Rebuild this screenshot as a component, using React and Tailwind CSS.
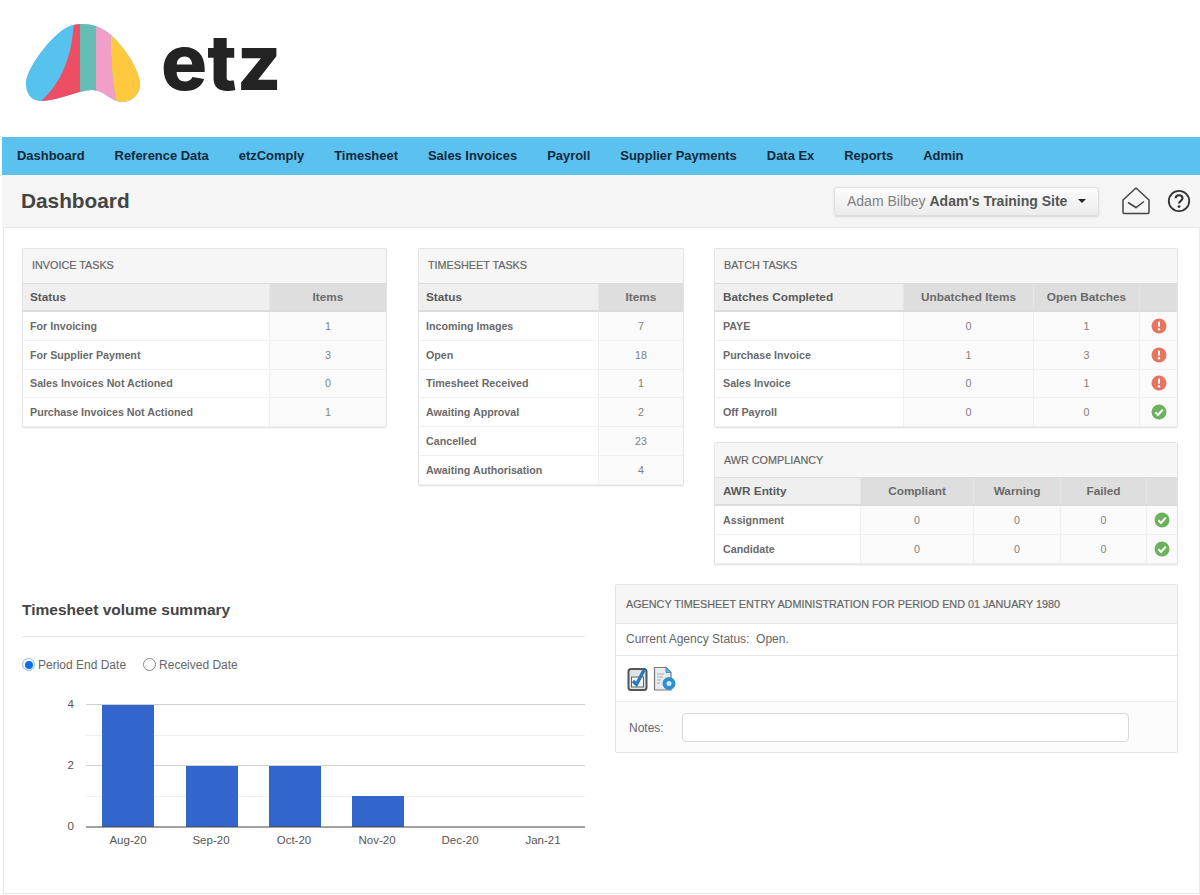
import React from "react";

const NAV = ["Dashboard","Reference Data","etzComply","Timesheet","Sales Invoices","Payroll","Supplier Payments","Data Ex","Reports","Admin"];

function Logo() {
  const blob = "M40 101C30 101 25 91 26 81C28 66 55 29 73 25C86 22 100 25 111 35C125 48 140 70 140 85C139 97 130 102 122 102C112 102 105 91 93 90C80 89 60 101 40 101Z";
  return (
    <svg width="130" height="90" viewBox="20 18 130 90" className="block">
      <defs><clipPath id="bl"><path d={blob} /></clipPath></defs>
      <g clipPath="url(#bl)">
        <rect x="20" y="18" width="130" height="90" fill="#58c2ee" />
        <path d="M74 20C72 60 60 85 38 104L80 104L81 20Z" fill="#ee4d63" />
        <rect x="80" y="18" width="17" height="90" fill="#66bdb4" />
        <path d="M96 18L96 108L118 108C113 90 110 60 111 18Z" fill="#f19fc8" />
        <path d="M111 18C110 60 113 90 118 108L150 108L150 18Z" fill="#fec93f" />
      </g>
    </svg>
  );
}

function Alert() {
  return (
    <svg width="16" height="16" viewBox="0 0 16 16" className="mx-auto block">
      <circle cx="8" cy="8" r="7.5" fill="#e8745f" />
      <rect x="7" y="3.5" width="2" height="5.5" rx="1" fill="#fff" />
      <circle cx="8" cy="11.3" r="1.2" fill="#fff" />
    </svg>
  );
}
function Ok() {
  return (
    <svg width="16" height="16" viewBox="0 0 16 16" className="mx-auto block">
      <circle cx="8" cy="8" r="7.5" fill="#6cb25c" />
      <path d="M4.3 8.3L7 11L11.8 5.6" fill="none" stroke="#fff" strokeWidth="2" />
    </svg>
  );
}

function Panel({ title, children, className }) {
  return (
    <section className={"border border-[#e3e3e3] rounded-[2px] bg-white shadow-[0_1px_1px_rgba(0,0,0,0.04)] " + className}>
      <h2 className="h-[34px] flex items-center pl-[9px] pb-[1px] bg-[#f6f6f6] text-[10.8px] font-normal text-[#666] [-webkit-text-stroke:0.2px_#666] uppercase">{title}</h2>
      {children}
    </section>
  );
}

function TaskTable({ cols, rows, inset = "pl-[7px]" }) {
  return (
    <div className="text-[#666]">
      <div className="flex h-[29px] pt-0 border-t border-b-2 border-[#dcdcdc]">
        {cols.map((c, i) => (
          <div key={i} className={c.w + " flex items-center pt-[2px] text-[11.8px] font-bold " + (i === 0 ? inset + " bg-[#efefef] text-[#5a5a5a]" : "justify-center bg-[#dedede] border-l border-[#e6e6e6] text-[#6a6a6a]")}>{c.t}</div>
        ))}
      </div>
      {rows.map((r, i) => (
        <div key={i} className="flex h-[28.8px] border-b border-[#f0f0f0]">
          {r.map((v, j) => (
            <div key={j} className={cols[j].w + " flex items-center " + (j === 0 ? inset + " text-[10.7px] font-bold text-[#6a6a6a]" : "justify-center text-[10.7px] text-[#808080] bg-[#fafafa] border-l border-[#efefef]")}>{v}</div>
          ))}
        </div>
      ))}
    </div>
  );
}

function Chart() {
  const bars = [[102, 705], [186, 766], [269, 766], [352, 796]];
  const labels = [["Aug-20",128],["Sep-20",211],["Oct-20",294],["Nov-20",377],["Dec-20",460],["Jan-21",543]];
  return (
    <svg width="566" height="170" viewBox="22 690 566 170" className="block mt-[17px]">
      {[735, 796].map(y => <line key={y} x1="86" x2="585" y1={y + 0.5} y2={y + 0.5} stroke="#efefef" />)}
      {[705, 766].map(y => <line key={y} x1="86" x2="585" y1={y - 0.5} y2={y - 0.5} stroke="#d0d0d0" />)}
      {bars.map(([x, y]) => <rect key={x} x={x} y={y} width="52" height={827 - y} fill="#3366cc" />)}
      <line x1="86" x2="585" y1="827" y2="827" stroke="#444" />
      {[[4, 708], [2, 769], [0, 830]].map(([t, y]) => (
        <text key={t} x="74" y={y} textAnchor="end" fontSize="11.5" fill="#555" fontFamily="Liberation Sans, Arial, sans-serif">{t}</text>
      ))}
      {labels.map(([t, x]) => (
        <text key={t} x={x} y="844" textAnchor="middle" fontSize="11.5" fill="#555" fontFamily="Liberation Sans, Arial, sans-serif">{t}</text>
      ))}
    </svg>
  );
}

function DocIcons() {
  return (
    <div className="flex items-center gap-[3px] pl-[11px] pt-[2px] h-[45px]">
      <svg width="23" height="26" viewBox="0 0 23 26">
        <rect x="1.5" y="3" width="18" height="21" rx="2.5" fill="#dfe3e6" stroke="#555" strokeWidth="2" />
        <rect x="4.5" y="11" width="12" height="10" fill="#f4f5f6" stroke="#666" />
        <path d="M6 15L9.5 18.5L17 4" fill="none" stroke="#2a7ab8" strokeWidth="3.4" />
      </svg>
      <svg width="24" height="26" viewBox="0 0 24 26">
        <path d="M1.5 1.5H13L18 6.5V24H1.5Z" fill="#e8ebed" stroke="#777" strokeWidth="1.2" />
        <path d="M4 8H11M4 11H10M4 14H8M4 17H7" stroke="#a8aeb4" />
        <path d="M13 1.5V6.5H18Z" fill="#6ab7e0" stroke="#4a8fbd" />
        <circle cx="16" cy="17.5" r="6.5" fill="#2f8fd0" />
        <circle cx="16" cy="17.5" r="2.5" fill="#cfe9f7" />
      </svg>
    </div>
  );
}

export default function App() {
  return (
    <div className="w-[1200px] h-[895px] overflow-hidden bg-white pl-[2px] font-['Liberation_Sans',Arial,sans-serif]">
      <header className="h-[137px] flex items-start">
        <div className="ml-[18px] mt-[18px]"><Logo /></div>
        <span className="ml-[11px] mt-[17px] text-[77px] leading-[90px] font-extrabold font-['Inter',sans-serif] text-[#232323]">etz</span>
      </header>

      <nav className="h-[38px] bg-[#5bc1ee] flex items-center gap-[30px] pl-[15px]">
        {NAV.map(n => <a key={n} className="text-[12.95px] font-bold text-[#12293d]">{n}</a>)}
      </nav>

      <div className="h-[52px] bg-[#f5f5f5] flex items-center pl-[19px]">
        <h1 className="text-[20.8px] font-bold text-[#444] w-[813px]">Dashboard</h1>
        <button className="w-[265px] h-[29px] rounded-[3px] border border-[#dedede] bg-gradient-to-b from-[#fcfcfc] to-[#ececec] shadow-[0_1px_2px_rgba(0,0,0,0.12)] flex items-center pl-[12px] text-[14px] text-[#808080]">
          <span>Adam Bilbey&nbsp;</span><b className="text-[#555]">Adam's Training Site</b>
          <span className="ml-[11px] w-0 h-0 border-x-[4px] border-x-transparent border-t-[4px] border-t-[#222]" />
        </button>
        <svg width="28" height="28" viewBox="0 0 28 28" className="ml-[23px]">
          <path d="M1 13L14 1L27 13V25.5Q27 26.5 26 26.5H2Q1 26.5 1 25.5Z" fill="none" stroke="#444" strokeWidth="1.5" strokeLinejoin="round" />
          <path d="M6 15.5L14 20.5L22 14.5" fill="none" stroke="#444" strokeWidth="1.5" />
        </svg>
        <svg width="24" height="24" viewBox="0 0 24 24" className="ml-[17px]">
          <circle cx="12" cy="12" r="10.2" fill="none" stroke="#333" strokeWidth="1.8" />
          <path d="M8.6 9.3C8.8 5.2 15.5 5.4 15.5 9.3C15.5 12 12 11.8 12 14.6" fill="none" stroke="#333" strokeWidth="2.1" />
          <circle cx="12" cy="17.6" r="1.4" fill="#333" />
        </svg>
      </div>

      <main className="ml-[1px] h-[667px] border border-[#e8e8e8] pl-[18px] pr-[20px] pt-[20px]">
        <div className="flex items-start">
          <Panel title="Invoice Tasks" className="w-[365px]">
            <TaskTable
              cols={[{ t: "Status", w: "w-[246px]" }, { t: "Items", w: "flex-1" }]}
              rows={[["For Invoicing", 1], ["For Supplier Payment", 3], ["Sales Invoices Not Actioned", 0], ["Purchase Invoices Not Actioned", 1]]}
            />
          </Panel>
          <Panel title="Timesheet Tasks" className="w-[266px] ml-[31px]">
            <TaskTable
              cols={[{ t: "Status", w: "w-[179px]" }, { t: "Items", w: "flex-1" }]}
              rows={[["Incoming Images", 7], ["Open", 18], ["Timesheet Received", 1], ["Awaiting Approval", 2], ["Cancelled", 23], ["Awaiting Authorisation", 4]]}
            />
          </Panel>
          <div className="w-[464px] ml-[30px] flex flex-col gap-[14px]">
            <Panel title="Batch Tasks">
              <TaskTable
                inset="pl-[8px]"
                cols={[{ t: "Batches Completed", w: "w-[188px]" }, { t: "Unbatched Items", w: "w-[130px]" }, { t: "Open Batches", w: "w-[106px]" }, { t: "", w: "flex-1" }]}
                rows={[["PAYE", 0, 1, <Alert />], ["Purchase Invoice", 1, 3, <Alert />], ["Sales Invoice", 0, 1, <Alert />], ["Off Payroll", 0, 0, <Ok />]]}
              />
            </Panel>
            <Panel title="AWR Compliancy">
              <TaskTable
                inset="pl-[8px]"
                cols={[{ t: "AWR Entity", w: "w-[145px]" }, { t: "Compliant", w: "w-[113px]" }, { t: "Warning", w: "w-[87px]" }, { t: "Failed", w: "w-[86px]" }, { t: "", w: "flex-1" }]}
                rows={[["Assignment", 0, 0, 0, <Ok />], ["Candidate", 0, 0, 0, <Ok />]]}
              />
            </Panel>
          </div>
        </div>

        <div className="flex items-start mt-[19px]">
          <div className="w-[563px]">
            <h3 className="mt-[16px] text-[15.5px] leading-[20px] font-bold text-[#444]">Timesheet volume summary</h3>
            <div className="mt-[16px] border-t border-[#e6e6e6]" />
            <div className="mt-[20px] flex items-center h-[16px] text-[12px] text-[#666]">
              <span className="w-[13px] h-[13px] rounded-full border-[1.5px] border-[#8ab8f0] bg-white flex items-center justify-center">
                <span className="w-[8px] h-[8px] rounded-full bg-[#0b6fe8]" />
              </span>
              <span className="ml-[3px]">Period End Date</span>
              <span className="ml-[17px] w-[13px] h-[13px] rounded-full border border-[#888] bg-white" />
              <span className="ml-[3px]">Received Date</span>
            </div>
            <Chart />
          </div>
          <section className="w-[563px] ml-[30px] border border-[#e3e3e3] rounded-[2px] bg-white">
            <h2 className="h-[39px] flex items-center pl-[10px] bg-[#f6f6f6] border-b border-[#e6e6e6] text-[10.8px] font-normal text-[#666] [-webkit-text-stroke:0.2px_#666] uppercase">Agency Timesheet Entry Administration for Period End 01 January 1980</h2>
            <div className="h-[32px] flex items-center pl-[10px] border-b border-[#e6e6e6] text-[12px] text-[#666]">Current Agency Status:&nbsp; Open.</div>
            <div className="border-b border-[#eeeeee]"><DocIcons /></div>
            <div className="h-[50px] flex items-center pl-[13px] pt-[2px] bg-[#fcfcfc] text-[12px] text-[#666]">
              <label className="w-[53px]">Notes:</label>
              <input className="w-[447px] h-[29px] bg-white border border-[#d8d8d8] rounded-[4px]" />
            </div>
          </section>
        </div>
      </main>
    </div>
  );
}
